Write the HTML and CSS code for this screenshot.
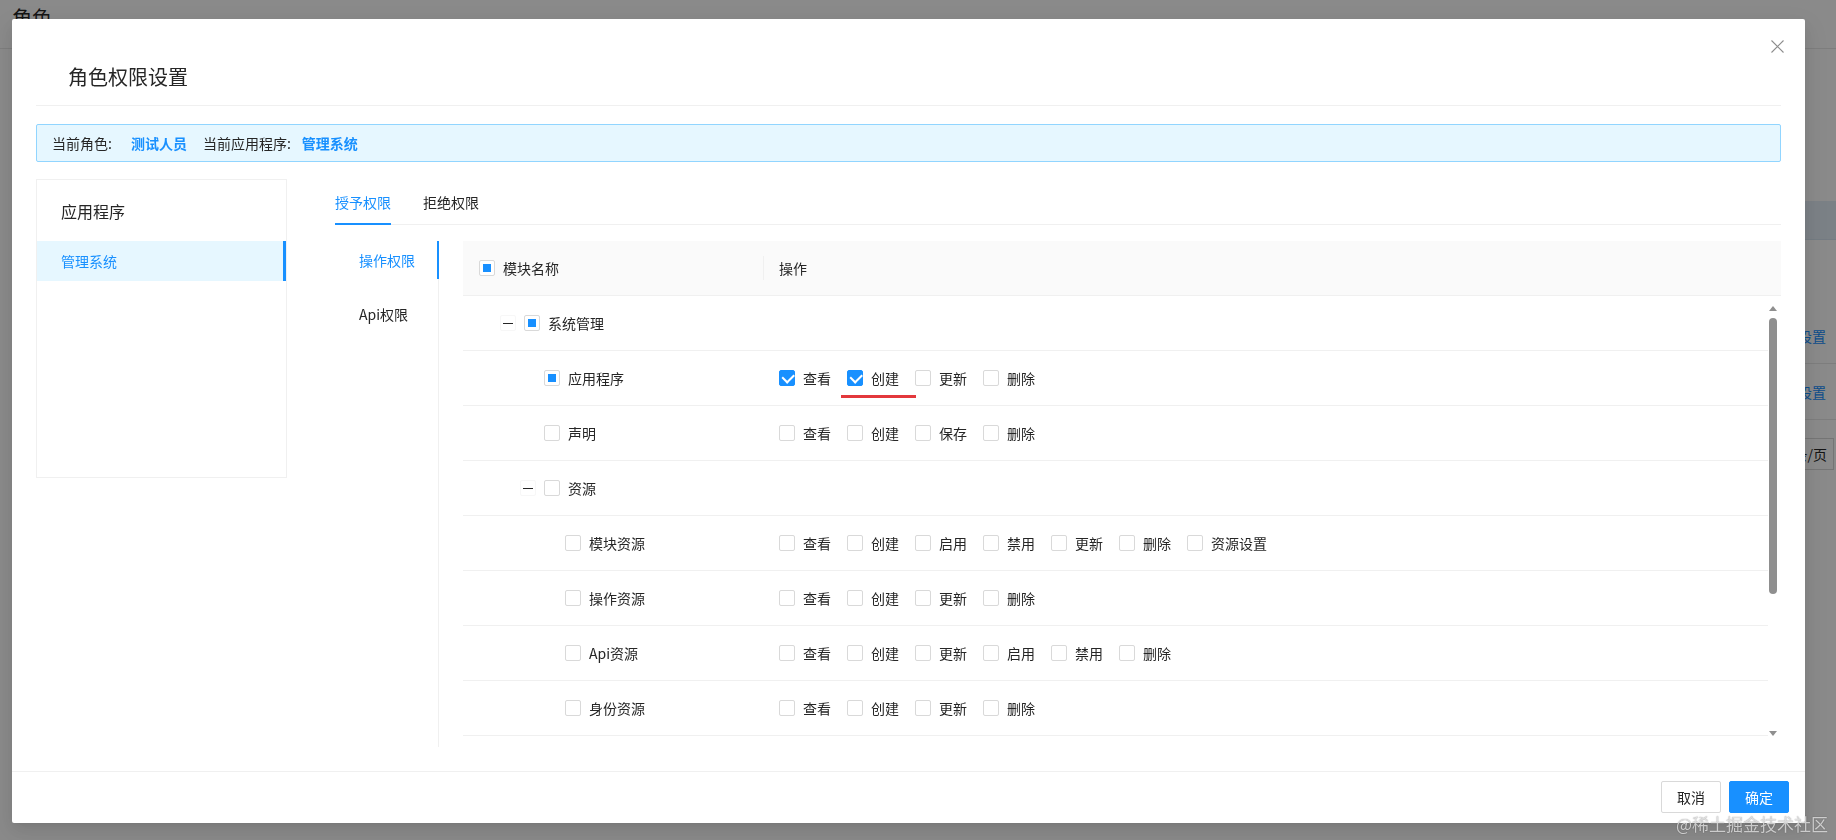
FILE: index.html
```html
<!DOCTYPE html>
<html lang="zh-CN">
<head>
<meta charset="utf-8">
<title>角色权限设置</title>
<link rel="stylesheet" href="styles.css">
</head>
<body>
<div class="page">
  <div class="page-head"><div class="page-title">角色</div></div>
  <div class="bg-table">
    <div class="bg-thead"></div>
    <div class="bg-row first"></div>
    <div class="bg-row"><span class="bg-link">权限设置</span></div>
    <div class="bg-row"><span class="bg-link">权限设置</span></div>
  </div>
  <div class="bg-pager"><span class="bg-size">10 条/页</span></div>
</div>

<div class="mask"></div>

<div class="modal">
  <div class="modal-header">
    <div class="modal-title">角色权限设置</div>
  </div>
  <span class="modal-close">
    <svg width="13" height="13" viewBox="0 0 13 13"><path d="M0.5 0.5L12.5 12.5M12.5 0.5L0.5 12.5" stroke="#8c8c8c" stroke-width="1.1" fill="none"/></svg>
  </span>

  <div class="modal-body">
    <div class="alert">
      <span>当前角色:</span><span class="val val1">测试人员</span>
      <span class="lbl2">当前应用程序:</span><span class="val val2">管理系统</span>
    </div>

    <div class="main">
      <div class="app-card">
        <div class="card-title">应用程序</div>
        <div class="menu-item">管理系统</div>
      </div>

      <div class="perm">
        <div class="tabs-nav">
          <div class="tab active">授予权限</div>
          <div class="tab">拒绝权限</div>
        </div>
        <div class="tabs-content">
          <div class="vtabs">
            <div class="vtab active">操作权限</div>
            <div class="vtab">Api权限</div>
          </div>

          <div class="table">
            <div class="thead">
              <div class="col-name"><span class="cb ind"></span><span class="cb-text">模块名称</span></div>
              <div class="col-ops">操作</div>
            </div>
            <div class="tbody">
              <div class="rows">
                <div class="row">
                  <div class="col-name lvl0"><span class="expand"></span><span class="cb ind"></span><span class="cb-text">系统管理</span></div>
                  <div class="col-ops"></div>
                </div>
                <div class="row">
                  <div class="col-name lvl1"><span class="expand-spacer"></span><span class="cb ind"></span><span class="cb-text">应用程序</span></div>
                  <div class="col-ops">
                    <label class="cb-label"><span class="cb checked"></span><span class="cb-text">查看</span></label>
                    <label class="cb-label"><span class="cb checked"></span><span class="cb-text">创建</span><span class="annot"></span></label>
                    <label class="cb-label"><span class="cb"></span><span class="cb-text">更新</span></label>
                    <label class="cb-label"><span class="cb"></span><span class="cb-text">删除</span></label>
                  </div>
                </div>
                <div class="row">
                  <div class="col-name lvl1"><span class="expand-spacer"></span><span class="cb"></span><span class="cb-text">声明</span></div>
                  <div class="col-ops">
                    <label class="cb-label"><span class="cb"></span><span class="cb-text">查看</span></label>
                    <label class="cb-label"><span class="cb"></span><span class="cb-text">创建</span></label>
                    <label class="cb-label"><span class="cb"></span><span class="cb-text">保存</span></label>
                    <label class="cb-label"><span class="cb"></span><span class="cb-text">删除</span></label>
                  </div>
                </div>
                <div class="row">
                  <div class="col-name lvl1"><span class="expand"></span><span class="cb"></span><span class="cb-text">资源</span></div>
                  <div class="col-ops"></div>
                </div>
                <div class="row">
                  <div class="col-name lvl2"><span class="expand-spacer"></span><span class="cb"></span><span class="cb-text">模块资源</span></div>
                  <div class="col-ops">
                    <label class="cb-label"><span class="cb"></span><span class="cb-text">查看</span></label>
                    <label class="cb-label"><span class="cb"></span><span class="cb-text">创建</span></label>
                    <label class="cb-label"><span class="cb"></span><span class="cb-text">启用</span></label>
                    <label class="cb-label"><span class="cb"></span><span class="cb-text">禁用</span></label>
                    <label class="cb-label"><span class="cb"></span><span class="cb-text">更新</span></label>
                    <label class="cb-label"><span class="cb"></span><span class="cb-text">删除</span></label>
                    <label class="cb-label"><span class="cb"></span><span class="cb-text">资源设置</span></label>
                  </div>
                </div>
                <div class="row">
                  <div class="col-name lvl2"><span class="expand-spacer"></span><span class="cb"></span><span class="cb-text">操作资源</span></div>
                  <div class="col-ops">
                    <label class="cb-label"><span class="cb"></span><span class="cb-text">查看</span></label>
                    <label class="cb-label"><span class="cb"></span><span class="cb-text">创建</span></label>
                    <label class="cb-label"><span class="cb"></span><span class="cb-text">更新</span></label>
                    <label class="cb-label"><span class="cb"></span><span class="cb-text">删除</span></label>
                  </div>
                </div>
                <div class="row">
                  <div class="col-name lvl2"><span class="expand-spacer"></span><span class="cb"></span><span class="cb-text">Api资源</span></div>
                  <div class="col-ops">
                    <label class="cb-label"><span class="cb"></span><span class="cb-text">查看</span></label>
                    <label class="cb-label"><span class="cb"></span><span class="cb-text">创建</span></label>
                    <label class="cb-label"><span class="cb"></span><span class="cb-text">更新</span></label>
                    <label class="cb-label"><span class="cb"></span><span class="cb-text">启用</span></label>
                    <label class="cb-label"><span class="cb"></span><span class="cb-text">禁用</span></label>
                    <label class="cb-label"><span class="cb"></span><span class="cb-text">删除</span></label>
                  </div>
                </div>
                <div class="row">
                  <div class="col-name lvl2"><span class="expand-spacer"></span><span class="cb"></span><span class="cb-text">身份资源</span></div>
                  <div class="col-ops">
                    <label class="cb-label"><span class="cb"></span><span class="cb-text">查看</span></label>
                    <label class="cb-label"><span class="cb"></span><span class="cb-text">创建</span></label>
                    <label class="cb-label"><span class="cb"></span><span class="cb-text">更新</span></label>
                    <label class="cb-label"><span class="cb"></span><span class="cb-text">删除</span></label>
                  </div>
                </div>
              </div>
              <div class="scrollbar">
                <span class="sb-up"></span>
                <span class="sb-thumb"></span>
                <span class="sb-space"></span>
                <span class="sb-down"></span>
              </div>
            </div>
          </div>
        </div>
      </div>
    </div>
  </div>

  <div class="modal-footer">
    <button class="btn">取消</button>
    <button class="btn primary">确定</button>
  </div>
</div>

<div class="wm">@稀土掘金技术社区</div>
</body>
</html>
```

FILE: styles.css
```css
* { box-sizing: border-box; }
html, body { margin: 0; height: 100%; }
body {
  font-family: "Noto Sans CJK SC", "Noto Sans", sans-serif;
  font-size: 14px;
  color: #262626;
  background: #fff;
  overflow: hidden;
}

/* background page */
.page { width: 100%; }
.page-head { height: 49px; padding: 4px 12px 0; border-bottom: 1px solid #e8e8e8; }
.page-title { font-size: 20px; line-height: 28px; color: #262626; }
.bg-table { margin: 152px 0 0 240px; }
.bg-thead { height: 39px; background: #e4eef7; border-bottom: 1px solid #d6e4f0; }
.bg-row {
  height: 56px; border-bottom: 1px solid #e8e8e8;
  display: flex; align-items: center; justify-content: flex-end; padding-right: 10px;
}
.bg-row.first { height: 68px; border-bottom: 0; }
.bg-link { color: #1890ff; }
.bg-pager { display: flex; justify-content: flex-end; margin-top: 18px; padding-right: 2px; }
.bg-size { height: 32px; line-height: 30px; border: 1px solid #d9d9d9; padding: 0 6px 0 11px; }

.mask { position: fixed; inset: 0; background: rgba(0, 0, 0, 0.46); }

/* modal */
.modal {
  position: fixed; left: 12px; top: 19px; width: 1793px; height: 804px;
  background: #fff; border-radius: 2px;
  box-shadow: 0 3px 6px -4px rgba(0,0,0,.12), 0 6px 16px rgba(0,0,0,.08), 0 9px 28px 8px rgba(0,0,0,.05);
  display: flex; flex-direction: column;
}
.modal-header { margin: 0 24px; padding: 44px 0 14px 32px; border-bottom: 1px solid #f0f0f0; }
.modal-title { font-size: 20px; line-height: 28px; color: #262626; }
.modal-close { position: absolute; top: 21px; right: 21px; width: 13px; height: 13px; display: flex; }

.modal-body { flex: 1; padding: 18px 24px 24px; display: flex; flex-direction: column; }

.alert {
  height: 38px; border: 1px solid #91d5ff; background: #e6f7ff; border-radius: 2px;
  padding: 0 15px; display: flex; align-items: center; line-height: 22px; white-space: nowrap;
}
.alert .val { color: #1890ff; font-weight: 600; }
.alert .val1 { margin-left: 19px; }
.alert .lbl2 { margin-left: 16px; }
.alert .val2 { margin-left: 11px; }

.main { display: flex; margin-top: 17px; flex: 1; }

.app-card { width: 251px; height: 299px; border: 1px solid #f0f0f0; flex: none; }
.card-title { height: 61px; padding-left: 24px; display: flex; align-items: center; font-size: 16px; color: #262626; }
.menu-item {
  height: 40px; line-height: 40px; padding-left: 24px;
  background: #e6f7ff; color: #1890ff; border-right: 3px solid #1890ff;
}

.perm { flex: 1; margin-left: 48px; display: flex; flex-direction: column; }
.tabs-nav { display: flex; gap: 32px; border-bottom: 1px solid #f0f0f0; }
.tab { position: relative; padding: 12px 0 11px; line-height: 22px; color: #262626; white-space: nowrap; }
.tab.active { color: #1890ff; }
.tab.active::after {
  content: ""; position: absolute; left: 0; right: 0; bottom: -1px; height: 2px; background: #1890ff;
}
.tabs-content { margin-top: 16px; flex: 1; display: flex; }

.vtabs { width: 104px; border-right: 1px solid #f0f0f0; flex: none; }
.vtab { position: relative; padding: 8px 0 8px 24px; line-height: 22px; color: #262626; white-space: nowrap; }
.vtab + .vtab { margin-top: 16px; }
.vtab.active { color: #1890ff; }
.vtab.active::after {
  content: ""; position: absolute; right: -1px; top: 0; bottom: 0; width: 2px; background: #1890ff;
}

.table { flex: 1; margin-left: 24px; display: flex; flex-direction: column; }
.thead {
  height: 55px; background: #fafafa; border-bottom: 1px solid #f0f0f0;
  display: flex; align-items: center; flex: none;
}
.col-name { width: 300px; padding-left: 16px; display: flex; align-items: center; flex: none; line-height: 22px; white-space: nowrap; }
.col-ops { flex: 1; padding-left: 16px; display: flex; align-items: center; position: relative; line-height: 22px; white-space: nowrap; }
.thead .col-ops::before {
  content: ""; position: absolute; left: 0; top: 50%; margin-top: -12px; width: 1px; height: 24px; background: #f0f0f0;
}

.tbody { height: 440px; display: flex; flex: none; }
.rows { flex: 1; }
.row { height: 55px; border-bottom: 1px solid #f0f0f0; display: flex; align-items: center; }

.lvl0 { padding-left: 37px; }
.lvl1 { padding-left: 57px; }
.lvl2 { padding-left: 78px; }

.expand {
  width: 16px; height: 16px; margin-right: 8px; flex: none; position: relative;
  border: 1px solid #f7f7f7; border-radius: 2px; background: #fff;
}
.expand::before {
  content: ""; position: absolute; left: 2px; right: 2px; top: 50%; height: 1px; margin-top: -0.5px; background: #262626;
}
.expand-spacer { width: 16px; height: 16px; margin-right: 8px; flex: none; }

.cb {
  position: relative; display: inline-block; width: 16px; height: 16px; flex: none;
  border: 1px solid #d9d9d9; border-radius: 2px; background: #fff;
}
.cb.checked { background: #1890ff; border-color: #1890ff; }
.cb.checked::after {
  content: ""; position: absolute; top: 50%; left: 21.5%; width: 5.71px; height: 9.14px;
  border: 2px solid #fff; border-top: 0; border-left: 0;
  transform: rotate(45deg) translate(-50%, -50%);
}
.cb.ind::after {
  content: ""; position: absolute; top: 50%; left: 50%; width: 8px; height: 8px;
  background: #1890ff; transform: translate(-50%, -50%);
}
.cb-text { padding: 0 8px; }
.cb-label { position: relative; display: inline-flex; align-items: center; margin-right: 8px; line-height: 22px; }
.annot { position: absolute; left: -6px; top: 28px; width: 75px; height: 3px; background: #e3383c; }

.scrollbar { width: 13px; flex: none; display: flex; flex-direction: column; align-items: flex-start; }
.sb-up, .sb-down { margin-left: 1px; width: 8px; height: 12px; display: flex; align-items: center; justify-content: center; }
.sb-up { margin-top: 6px; }
.sb-down { margin-bottom: -3px; }
.sb-up::before {
  content: ""; border-left: 4px solid transparent; border-right: 4px solid transparent; border-bottom: 5px solid #8f8f8f;
}
.sb-down::before {
  content: ""; border-left: 4px solid transparent; border-right: 4px solid transparent; border-top: 5px solid #8f8f8f;
}
.sb-thumb { margin: 4px 0 0 1px; width: 8px; height: 276px; border-radius: 4px; background: #8f8f8f; }
.sb-space { flex: 1; }

.modal-footer {
  border-top: 1px solid #f0f0f0; padding: 9px 16px 10px;
  display: flex; justify-content: flex-end; gap: 8px;
}
.btn {
  height: 32px; padding: 4px 15px; line-height: 22px; font-size: 14px; font-family: inherit;
  border: 1px solid #d9d9d9; border-radius: 2px; background: #fff; color: #262626;
}
.btn.primary { background: #1890ff; border-color: #1890ff; color: #fff; }

.wm {
  position: fixed; right: 8px; bottom: 4px; font-size: 17px; line-height: 24px;
  color: rgba(255, 255, 255, 0.72); text-shadow: 0 0 1px rgba(0, 0, 0, 0.55); white-space: nowrap;
}
```
